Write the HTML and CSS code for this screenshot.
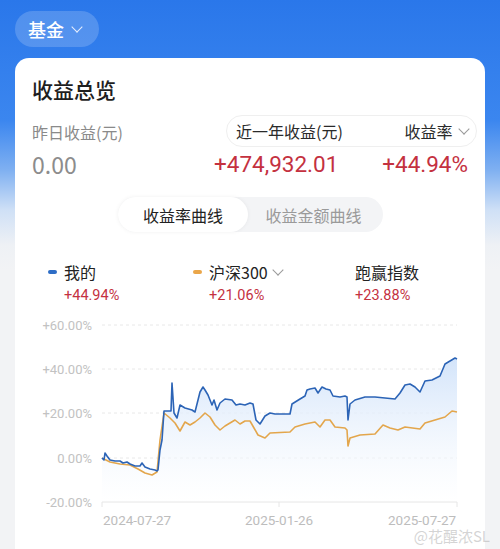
FILE: index.html
```html
<!DOCTYPE html>
<html lang="zh-CN">
<head>
  <meta charset="UTF-8" />
  <title>收益总览</title>
  <link rel="stylesheet" href="styles.css">
</head>
<body>

  <div class="topbar">
    <div class="fund-pill">基金 <span class="chev chev-white"></span></div>
  </div>

  <div class="card">
    <h2 class="title">收益总览</h2>

    <div class="summary">
      <div class="col-left">
        <div class="label">昨日收益(元)</div>
        <div class="zero">0.00</div>
      </div>
      <div class="col-right">
        <div class="range-pill">
          <span>近一年收益(元)</span>
          <span>收益率 <span class="chev"></span></span>
        </div>
        <div class="nums">
          <span class="red big">+474,932.01</span>
          <span class="red big">+44.94%</span>
        </div>
      </div>
    </div>

    <div class="tabs">
      <div class="tab active">收益率曲线</div>
      <div class="tab">收益金额曲线</div>
    </div>

    <div class="legend">
      <div class="item">
        <div class="name"><i class="dash blue"></i>我的</div>
        <div class="red val">+44.94%</div>
      </div>
      <div class="item">
        <div class="name"><i class="dash orange"></i>沪深300 <span class="chev"></span></div>
        <div class="red val">+21.06%</div>
      </div>
      <div class="item plain">
        <div class="name">跑赢指数</div>
        <div class="red val">+23.88%</div>
      </div>
    </div>

    <svg class="chart" width="470" height="230" viewBox="0 0 470 230">
      <defs>
        <linearGradient id="fill" x1="0" y1="0" x2="0" y2="1">
          <stop offset="0" stop-color="#d3e4fa" />
          <stop offset="1" stop-color="#ffffff" stop-opacity="0.4" />
        </linearGradient>
      </defs>
      <g transform="translate(-15,-310)">
        <g class="ylab">
          <text x="92" y="330">+60.00%</text>
          <text x="92" y="374">+40.00%</text>
          <text x="92" y="418">+20.00%</text>
          <text x="92" y="463">0.00%</text>
          <text x="92" y="507">-20.00%</text>
        </g>
        <g class="grid">
          <line x1="102" y1="325" x2="457" y2="325" />
          <line x1="102" y1="369" x2="457" y2="369" />
          <line x1="102" y1="413" x2="457" y2="413" />
          <line x1="102" y1="458" x2="457" y2="458" />
        </g>
        <polygon fill="url(#fill)" points="102,458 104,460 105,453 107,456 110,460 115,461 120,461 123,463 127,462 130,464 135,466 140,466 142,463 145,467 150,469 155,470 157,471 158,470 160,450 162,440 164,411 171,411 172,383 174,413 177,418 180,405 185,408 192,410 195,412 200,392 203,387 205,390 208,395 212,405 214,400 217,410 220,403 225,399 232,400 236,405 240,404 245,405 250,403 253,404 256,420 260,424 265,416 270,413 275,414 290,414 292,404 300,399 305,396 307,390 310,389 315,388 318,393 322,387 326,389 330,390 333,396 340,397 345,396 347,397 348,420 350,404 355,400 365,397 375,397 385,398 395,399 400,393 405,385 410,384 415,387 420,392 425,381 432,380 440,376 445,364 450,361 455,358 457,359 457,502 102,502" />
        <polyline class="line orange-line" points="102,458 106,460 110,462 120,464 130,465 138,469 145,473 152,475 157,472 160,440 164,413 170,418 175,423 180,431 185,422 190,425 195,422 200,418 205,413 210,417 215,425 220,430 225,426 235,420 240,424 245,421 250,421 254,428 258,435 265,438 270,433 290,432 295,427 305,424 315,422 320,427 325,420 330,420 335,427 345,428 347,430 348,446 350,438 360,435 375,434 383,425 390,428 398,430 405,427 420,429 425,423 435,420 445,417 452,411 457,412" />
        <polyline class="line blue-line" points="102,458 104,460 105,453 107,456 110,460 115,461 120,461 123,463 127,462 130,464 135,466 140,466 142,463 145,467 150,469 155,470 157,471 158,470 160,450 162,440 164,411 171,411 172,383 174,413 177,418 180,405 185,408 192,410 195,412 200,392 203,387 205,390 208,395 212,405 214,400 217,410 220,403 225,399 232,400 236,405 240,404 245,405 250,403 253,404 256,420 260,424 265,416 270,413 275,414 290,414 292,404 300,399 305,396 307,390 310,389 315,388 318,393 322,387 326,389 330,390 333,396 340,397 345,396 347,397 348,420 350,404 355,400 365,397 375,397 385,398 395,399 400,393 405,385 410,384 415,387 420,392 425,381 432,380 440,376 445,364 450,361 455,358 457,359" />
        <g class="axis">
          <line x1="102" y1="502" x2="457" y2="502" />
          <line x1="102" y1="502" x2="102" y2="507" />
          <line x1="279" y1="502" x2="279" y2="507" />
          <line x1="457" y1="502" x2="457" y2="507" />
        </g>
        <g class="xlab">
          <text x="103" y="525">2024-07-27</text>
          <text x="245" y="525">2025-01-26</text>
          <text x="388" y="525">2025-07-27</text>
        </g>
      </g>
    </svg>
  </div>

  <div class="watermark">@花醒浓SL</div>

</body>
</html>
```

FILE: styles.css
```css
body {
  margin: 0;
  height: 549px;
  overflow: hidden;
  font-family: "Noto Sans CJK SC", "Noto Sans", sans-serif;
  background: linear-gradient(180deg, #2a77ea 0px, #3b86ef 120px, #7fb0f1 170px, #cfe0f6 210px, #eef1f5 245px, #f2f3f5 270px);
  position: relative;
}
.topbar {
  padding: 11px 15px 0;
}
.fund-pill {
  display: inline-flex;
  align-items: center;
  height: 36px;
  width: 84px;
  box-sizing: border-box;
  padding-left: 13px;
  gap: 9px;
  border-radius: 18px;
  background: rgba(255,255,255,0.18);
  color: #fff;
  font-size: 18px;
  font-weight: 500;
}
.chev {
  display: inline-block;
  width: 7px;
  height: 7px;
  border-right: 1.3px solid #999;
  border-bottom: 1.3px solid #999;
  transform: rotate(45deg);
  margin: 0 2px 5px 4px;
}
.chev-white {
  border-color: #e6eefc;
  margin-left: 0;
}
.card {
  margin: 11px 15px 0;
  background: #fff;
  border-radius: 14px 14px 0 0;
  padding: 17px 17px 0;
  height: 500px;
  box-sizing: border-box;
}
.title {
  margin: 0;
  font-size: 21px;
  line-height: 28px;
  font-weight: 500;
  color: #1e1e1e;
}
.summary {
  display: flex;
  justify-content: space-between;
  margin-top: 12px;
}
.label {
  margin-top: 7px;
  font-size: 16px;
  line-height: 20px;
  color: #8a8a8a;
}
.zero {
  margin-top: 9px;
  font-size: 23px;
  line-height: 26px;
  color: #8c8c8c;
}
.col-right {
  width: 251px;
  margin-right: -9px;
}
.range-pill {
  display: flex;
  justify-content: space-between;
  align-items: center;
  height: 32px;
  box-sizing: border-box;
  padding: 0 6px 0 9px;
  border: 1px solid #efefef;
  border-radius: 16px;
  font-size: 16px;
  color: #2a2a2a;
}
.nums {
  display: flex;
  justify-content: space-between;
  margin: 2px 9px 0 -12px;
}
.red {
  color: #c4313f;
}
.big {
  font-size: 22.5px;
  line-height: 30px;
  font-family: "Roboto", "Noto Sans", sans-serif;
}
.tabs {
  display: flex;
  width: 265px;
  height: 35px;
  margin: 18px 0 0 86px;
  background: #f3f4f6;
  border-radius: 18px;
  font-size: 16px;
}
.tab {
  flex: 1;
  display: flex;
  align-items: center;
  justify-content: center;
  color: #9a9a9a;
  border-radius: 18px;
}
.tab.active {
  color: #222;
  background: #fff;
  box-shadow: 0 0 4px rgba(0,0,0,0.06);
  flex: 0 0 130px;
}
.tab:last-child {
  padding-right: 4px;
}
.legend {
  display: grid;
  grid-template-columns: 145px 162px 1fr;
  margin: 28px 0 0 16px;
}
.name {
  display: flex;
  align-items: center;
  height: 24px;
  font-size: 16px;
  color: #222;
}
.name .chev {
  margin-left: 6px;
}
.dash {
  display: inline-block;
  width: 9px;
  height: 4px;
  border-radius: 2px;
  margin-right: 7px;
}
.dash.blue {
  background: #2e6dc6;
}
.dash.orange {
  background: #eaa649;
}
.val {
  margin: 2px 0 0 16px;
  font-size: 14.5px;
  line-height: 20px;
  font-family: "Roboto", "Noto Sans", sans-serif;
}
.plain .val {
  margin-left: 0;
}
.chart {
  display: block;
  margin-left: -17px;
  margin-top: 4px;
}
.ylab text {
  font-family: "Roboto", "Noto Sans", sans-serif;
  font-size: 13px;
  fill: #c2c2c2;
  text-anchor: end;
}
.xlab text {
  font-family: "Roboto", "Noto Sans", sans-serif;
  font-size: 13.5px;
  fill: #bdbdbd;
}
.grid line {
  stroke: #e8e8e8;
  stroke-width: 1;
  stroke-dasharray: 3 3;
}
.axis line {
  stroke: #e6e6e6;
  stroke-width: 1;
}
.line {
  fill: none;
  stroke-width: 1.6;
  stroke-linejoin: round;
}
.blue-line {
  stroke: #2c64b6;
}
.orange-line {
  stroke: #e3a64c;
}
.watermark {
  position: absolute;
  right: 10px;
  bottom: 3px;
  font-size: 15px;
  color: rgba(170,170,170,0.5);
}
```
